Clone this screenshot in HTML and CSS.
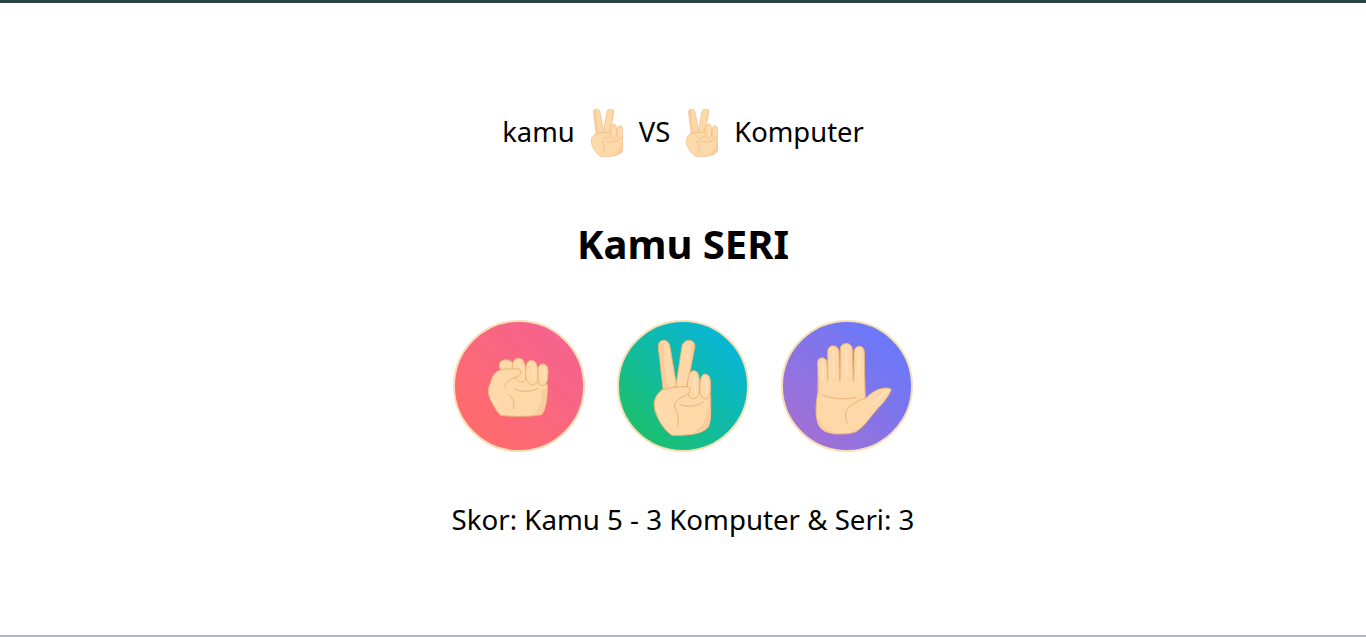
FILE: index.html
```html
<!DOCTYPE html>
<html lang="id">
<head>
<meta charset="utf-8">
<title>Kamu SERI</title>
<link rel="stylesheet" href="styles.css">
</head>
<body>
<svg class="defs" aria-hidden="true">
  <defs>
    <g id="hand-rock">
      <path class="skin" d="M165 180C150 185 140 200 136 220C128 235 128 250 134 262C140 280 155 305 167 316C205 321 260 320 290 314C302 300 306 270 308 225L200 170Z"/>
      <path class="shade" d="M290 240C295 270 285 300 262 316L290 314C302 300 306 270 307 235Z"/>
      <path class="skin" d="M175 181C158 178 158 152 178 150C195 147 206 155 205 175L203 190Z"/>
      <path class="skin" d="M205 190C198 165 202 146 220 145C236 144 241 160 242 180L243 205C235 225 210 217 205 190Z"/>
      <path class="skin" d="M243 200C240 175 243 150 260 151C277 152 279 175 279 200C279 234 248 234 243 200Z"/>
      <path class="skin" d="M279 180C278 165 290 160 298 163C311 166 310 185 308 205C306 234 280 234 279 205Z"/>
      <path class="shine" d="M226 165L228 188M265 172L267 205M299 178L298 205"/>
      <path class="skin" d="M165 180C185 176 210 175 225 178C232 188 226 198 212 202C195 207 182 215 176 233"/>
      <path class="line" d="M210 238C230 246 258 246 278 236M192 254C205 265 210 282 205 296"/>
      <path class="shine" d="M140 268C146 278 152 284 160 290"/>
    </g>
    <g id="hand-scissors">
      <path class="skin" d="M155 240C137 255 130 272 133 292C137 320 160 360 186 376C225 378 280 372 295 350C303 335 302 300 302 255L200 225Z"/>
      <path class="shade" d="M290 300C292 330 270 362 235 374C260 372 285 365 295 350C303 335 302 315 302 290Z"/>
      <path class="skin" d="M160 242L145 112C143 84 176 84 180 110L200 228Z"/>
      <path class="shade" d="M163 105C159 130 165 190 174 234L160 240L147 112C147 100 153 96 163 105Z"/>
      <path class="skin" d="M197 232L216 108C222 84 258 86 254 112L238 195L232 232Z"/>
      <path class="shade" d="M243 100C249 130 236 190 227 232L232 232L238 195L253 112C254 104 250 98 243 100Z"/>
      <path class="skin" d="M234 250C230 225 232 185 250 182C269 180 269 210 268 240C268 272 238 274 234 250Z"/>
      <path class="skin" d="M270 245C268 225 270 192 285 192C303 193 302 215 302 240C302 274 272 274 270 245Z"/>
      <path class="shine" d="M254 198L257 250M290 208L291 250"/>
      <path class="skin" d="M155 240C180 232 215 228 238 231C243 240 238 252 225 258C205 264 195 275 193 290"/>
      <path class="line" d="M210 284C228 292 258 290 280 276M193 290C205 310 208 330 202 350"/>
      <path class="shine" d="M143 295C150 312 165 330 180 340"/>
    </g>
    <g id="hand-paper">
      <path class="skin" d="M137 250C130 290 130 320 140 345C150 365 175 373 205 372C235 372 252 368 262 358C280 345 295 320 318 295C335 278 350 258 358 240C355 232 335 232 315 240C298 248 290 258 280 264L277 190L140 190Z"/>
      <path class="shade" d="M135 300C135 330 150 362 205 371C175 373 150 365 140 345C133 330 132 315 135 300Z"/>
      <path class="skin" d="M139 250L137 155C140 138 164 140 165 158L168 240Z"/>
      <path class="skin" d="M167 240L167 122C170 101 199 104 201 124L204 240Z"/>
      <path class="skin" d="M204 240L205 116C208 94 239 95 241 118L245 240Z"/>
      <path class="skin" d="M245 240L246 124C250 102 277 105 277 126L279 262Z"/>
      <path class="patch" d="M141 214L275 214L278 262L141 262Z"/>
      <path class="shine" d="M152 160L153 205M184 125L185 200M223 118L224 195M262 128L261 200"/>
      <path class="line" d="M150 254C180 268 225 270 252 262M287 262C255 272 232 285 222 305C218 318 222 330 226 338"/>
      <path class="shine" d="M300 285C315 270 330 255 345 242"/>
    </g>
  </defs>
</svg>
<main class="game">
  <p class="versus">
    <span class="label">kamu</span>
    <svg class="mini" viewBox="132 92 170 286" preserveAspectRatio="none"><use href="#hand-scissors"/></svg>
    <span class="label">VS</span>
    <svg class="mini" viewBox="132 92 170 286" preserveAspectRatio="none"><use href="#hand-scissors"/></svg>
    <span class="label">Komputer</span>
  </p>
  <h1 class="result">Kamu SERI</h1>
  <div class="choices">
    <div class="choice rock"><svg class="hand" viewBox="30 36 384 384"><use href="#hand-rock"/></svg></div>
    <div class="choice scissors"><svg class="hand" viewBox="27 36 384 384"><use href="#hand-scissors"/></svg></div>
    <div class="choice paper"><svg class="hand" viewBox="33 36 384 384"><use href="#hand-paper"/></svg></div>
  </div>
  <p class="score">Skor: Kamu 5 - 3 Komputer &amp; Seri: 3</p>
</main>
</body>
</html>
```
FILE: styles.css
```css
* { box-sizing: border-box; }
html, body { margin: 0; height: 100%; }
body {
  display: flex;
  flex-direction: column;
  height: 637px;
  overflow: hidden;
  background: #fff;
  border-top: 3px solid #2c4243;
  border-bottom: 2px solid #b4b8c4;
  font-family: "Noto Sans", "Open Sans", sans-serif;
  color: #000;
}
.defs { width: 0; height: 0; position: absolute; }
.game {
  flex: 1;
  display: flex;
  flex-direction: column;
  align-items: center;
  padding-top: 106px;
}
.versus {
  display: flex;
  align-items: center;
  gap: 16px;
  margin: 0;
  height: 48px;
  font-size: 27.4px;
  line-height: 40px;
}
.label { margin-bottom: 2px; }
.mini { width: 32px; height: 48px; }
.result {
  margin: 61px 0 0;
  font-size: 40px;
  line-height: 52px;
  font-weight: 700;
}
.choices {
  display: flex;
  gap: 32px;
  margin-top: 50px;
}
.choice {
  width: 132px;
  height: 132px;
  border: 2px solid #f6dfb4;
  border-radius: 50%;
  overflow: hidden;
}
.hand { display: block; width: 128px; height: 128px; }
.rock { background: linear-gradient(45deg, #ff6b6b 15%, #f5638f 85%); }
.scissors { background: linear-gradient(45deg, #1bbf70 15%, #07b6d6 85%); }
.paper { background: linear-gradient(45deg, #a56fd2 10%, #6c78f8 80%); }
.skin { fill: #fdd8a9; stroke: #e9b277; stroke-width: 3; stroke-linejoin: round; }
.patch { fill: #fdd8a9; }
.shade { fill: #f9cd9b; }
.line { fill: none; stroke: #e9b277; stroke-width: 3; stroke-linecap: round; }
.shine { fill: none; stroke: #fee2bf; stroke-width: 5; stroke-linecap: round; }
.score {
  margin: 48px 0 0;
  font-size: 27.67px;
  line-height: 38px;
}
```
